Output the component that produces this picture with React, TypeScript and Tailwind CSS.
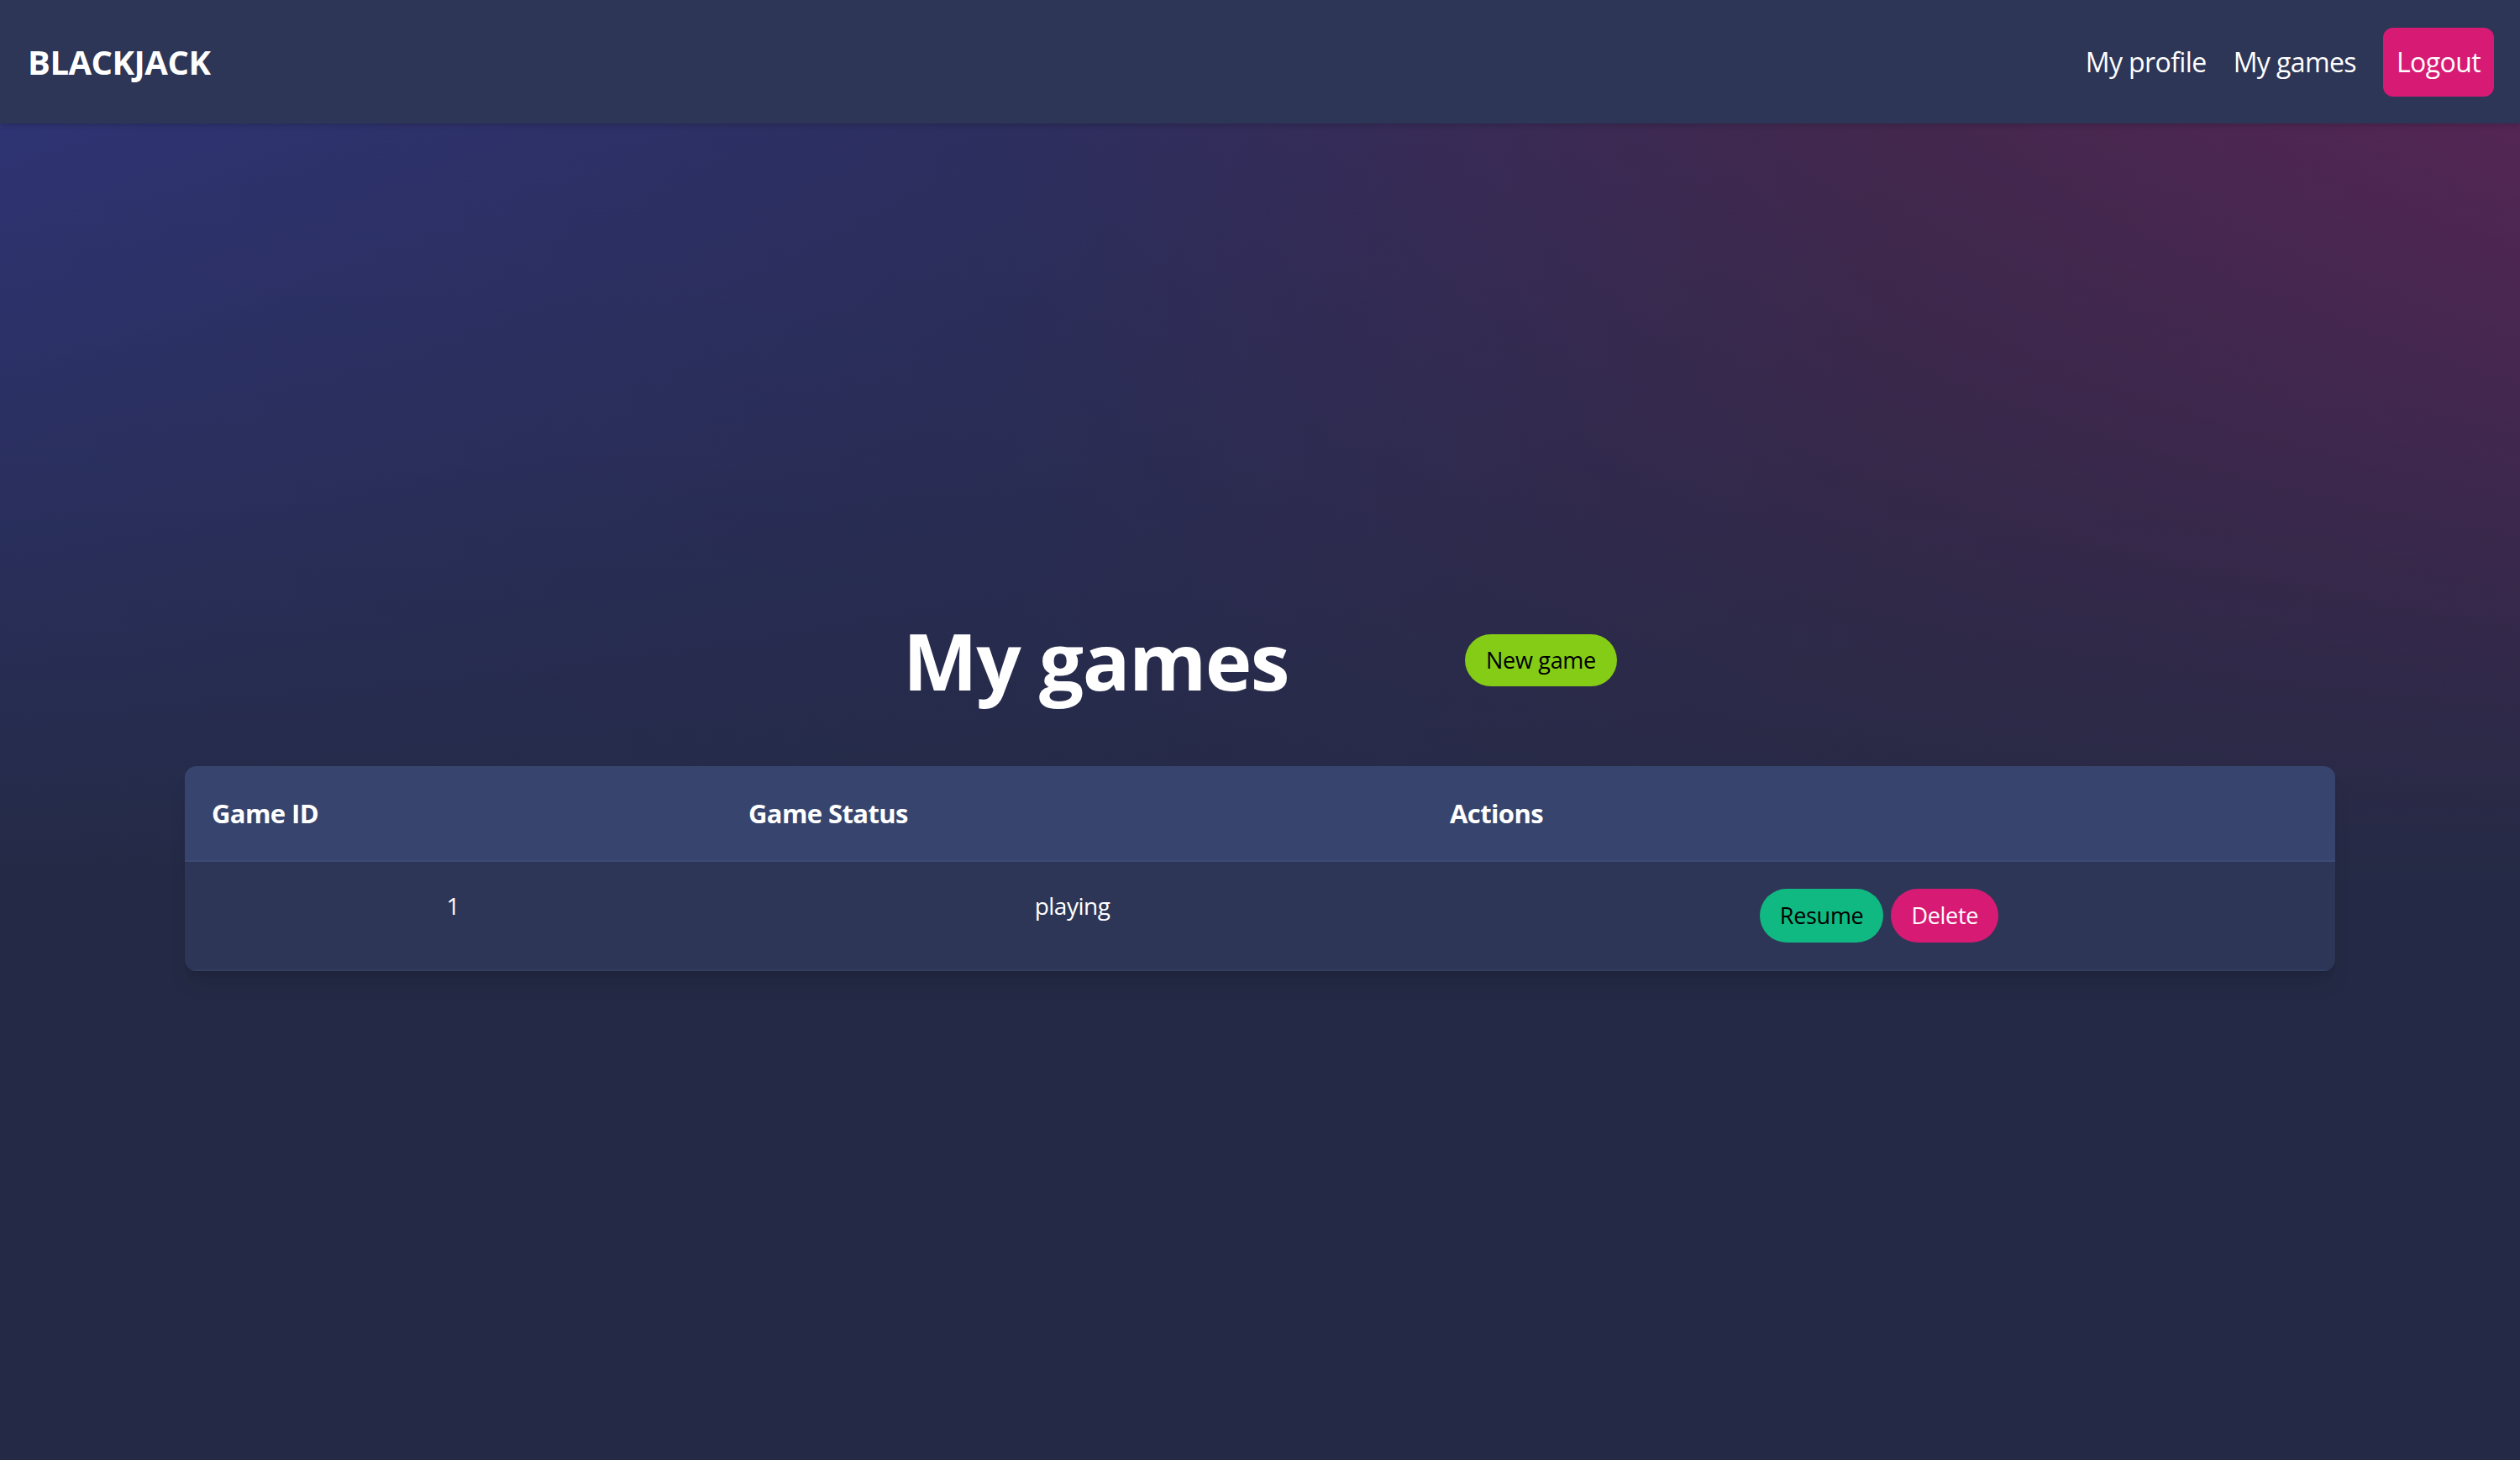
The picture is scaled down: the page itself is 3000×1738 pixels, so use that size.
const games = [{ id: 1, status: "playing" }];

const Navbar = () => {
  return (
    <nav className="h-[147px] shrink-0 bg-[#2d3656] flex items-center justify-between pl-[33px] pr-[31px] shadow-md">
      <a href="#" className="text-[40px] font-bold text-white tracking-[-0.5px]">
        BLACKJACK
      </a>
      <div className="flex items-center gap-[32px] text-[32px] text-white tracking-[-0.6px]">
        <a href="#" className="hover:opacity-80">My profile</a>
        <a href="#" className="hover:opacity-80">My games</a>
        <button className="bg-[#d71b74] rounded-[12px] px-[16px] py-[17px] leading-[48px]">Logout</button>
      </div>
    </nav>
  );
};

const App = () => {
  return (
    <div
      className="min-h-[1738px] flex flex-col text-white bg-[#242a45] bg-[linear-gradient(to_bottom,rgba(36,42,69,0)_0px,rgba(36,42,69,0.4)_450px,rgba(36,42,69,1)_1050px),linear-gradient(to_right,#30357a_0%,#2e2f63_40%,#48274f_75%,#5b2556_100%)]"
      style={{ fontFamily: '"Open Sans", "Noto Sans", sans-serif' }}
    >
      <Navbar />
      <main className="flex-1 flex flex-col justify-center px-[220px] pt-[8px]">
        <div className="flex items-center justify-center gap-[210px] mb-[78px]">
          <h1 className="text-[94px] leading-[96px] font-bold tracking-[-1.5px]">My games</h1>
          <button className="bg-[#84cc16] text-black text-[27px] leading-[40px] px-[25px] py-[11px] rounded-full tracking-[-0.3px]">
            New game
          </button>
        </div>
        <div className="rounded-[14px] overflow-hidden shadow-xl">
          <div className="grid grid-cols-[639px_835px_1fr] bg-[#37456e] border-b-2 border-[#3d4a74] text-[31px] font-bold leading-[48px] tracking-[-0.6px]">
            <div className="px-[32px] py-[32px]">Game ID</div>
            <div className="px-[32px] py-[32px]">Game Status</div>
            <div className="px-[32px] py-[32px]">Actions</div>
          </div>
          {games.map((g) => (
            <div
              key={g.id}
              className="grid grid-cols-[639px_835px_1fr] bg-[#2d3656] border-b-2 border-[#333e63] text-[28px] leading-[40px] text-center"
            >
              <div className="px-[32px] py-[32px]">{g.id}</div>
              <div className="px-[32px] py-[32px] tracking-[-0.5px]">{g.status}</div>
              <div className="px-[32px] py-[32px] flex justify-center gap-[9px] text-[27px] tracking-[-0.3px]">
                <button className="bg-[#10b981] text-black px-[24px] py-[12px] rounded-full">Resume</button>
                <button className="bg-[#d71b74] text-white px-[24px] py-[12px] rounded-full">Delete</button>
              </div>
            </div>
          ))}
        </div>
      </main>
    </div>
  );
};

export default App;
